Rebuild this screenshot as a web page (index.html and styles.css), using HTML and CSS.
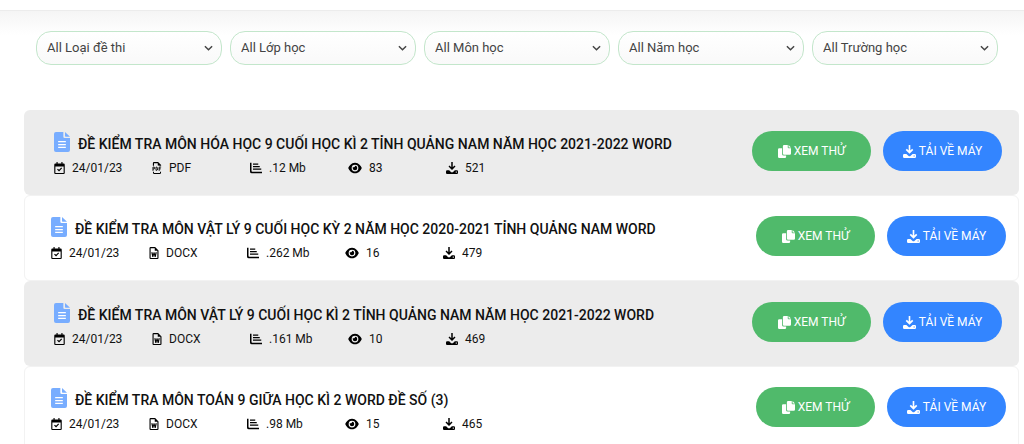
FILE: index.html
```
<!DOCTYPE html>
<html lang="vi">
<head>
<meta charset="utf-8">
<title>Đề thi</title>
<link rel="stylesheet" href="styles.css">
</head>
<body>
<svg class="sprite" aria-hidden="true">
  <symbol id="doc" viewBox="0 0 384 480"><path d="M48 0H224V112q0 32 32 32H384V432q0 48-48 48H48Q0 480 0 432V48Q0 0 48 0z"/><path d="M264 0L384 112H280q-16 0-16-16z"/><path class="doc-lines" d="M100 232H284M100 300H284M100 368H284"/></symbol>
  <symbol id="calendar" viewBox="0 0 448 512"><path fill-rule="evenodd" d="M96 0h48v64h160V0h48v64h48q48 0 48 48v352q0 48-48 48H48Q0 512 0 464V112Q0 64 48 64h48zM48 192v272h352V192zM334 270L204 400 120 318l34-34 50 48 96-96z"/></symbol>
  <symbol id="word" viewBox="0 0 384 512"><path fill-rule="evenodd" d="M48 0h192l144 144v320q0 48-48 48H48Q0 512 0 464V48Q0 0 48 0zM48 48v416h288V160H224V48z"/><path d="M76 224h54l20 100 24-100h40l24 100 20-100h54l-48 200h-44l-28-100-28 100h-44z"/></symbol>
  <symbol id="pdf" viewBox="0 0 416 512"><path d="M32 160V48Q32 0 80 0h176l128 128v32h-48l-96-16V48H80v112zM32 416h48v48h256v-48h48q0 96-48 96H80q-48 0-48-96z"/><path class="pdf-mark" d="M36 376V216h36q40 0 40 40t-40 40H36M166 218V358h16q52 0 52-70t-52-70zM300 376V216h84M300 292h68"/></symbol>
  <symbol id="chart" viewBox="0 0 512 512"><path d="M0 32h64v350q0 34 34 34h414v64H80Q0 480 0 400zM128 60h224v60H128zM128 166h288v60H128zM128 272h352v60H128z"/></symbol>
  <symbol id="eye" viewBox="0 0 576 512"><path fill-rule="evenodd" d="M288 32c-81 0-145 37-192 80C49 156 18 208 3 244q-5 12 0 24c15 36 46 88 93 132 47 43 111 80 192 80s145-37 192-80c47-44 78-96 93-132q5-12 0-24c-15-36-46-88-93-132-47-43-111-80-192-80zM144 256a144 144 0 1 1 288 0 144 144 0 1 1-288 0z"/><path d="M288 160q0 74-64 64-14 0-31-5-2 18-1 37a96 96 0 1 0 96-96z"/></symbol>
  <symbol id="download" viewBox="0 0 512 512"><path fill-rule="evenodd" d="M224 0h64v220l72-70 46 46-150 148-150-148 46-46 72 70zM0 400q0-48 48-48h86l76 74q46 40 92 0l76-74h86q48 0 48 48v64q0 48-48 48H48Q0 512 0 464zM416 410v44h44v-44z"/></symbol>
  <symbol id="copy" viewBox="0 0 512 512"><path d="M240 0h144v96q0 32 32 32h96v208q0 48-48 48H240q-48 0-48-48V48q0-48 48-48zM416 0l96 96h-96zM48 128h112v224q0 64 64 64h96v48q0 48-48 48H48Q0 512 0 464V176q0-48 48-48z"/></symbol>
  <symbol id="chevron" viewBox="0 0 10 6"><path class="chevron-line" d="M1 1l4 4 4-4"/></symbol>
</svg>

<header class="topbar"></header>
<main class="page">
  <form class="filters">
    <div class="filter"><select class="filter-select" aria-label="Loại đề thi"><option>All Loại đề thi</option></select><svg class="chevron"><use href="#chevron"/></svg></div>
    <div class="filter"><select class="filter-select" aria-label="Lớp học"><option>All Lớp học</option></select><svg class="chevron"><use href="#chevron"/></svg></div>
    <div class="filter"><select class="filter-select" aria-label="Môn học"><option>All Môn học</option></select><svg class="chevron"><use href="#chevron"/></svg></div>
    <div class="filter"><select class="filter-select" aria-label="Năm học"><option>All Năm học</option></select><svg class="chevron"><use href="#chevron"/></svg></div>
    <div class="filter"><select class="filter-select" aria-label="Trường học"><option>All Trường học</option></select><svg class="chevron"><use href="#chevron"/></svg></div>
  </form>

  <section class="list">
    <article class="item">
      <div class="info">
        <h2 class="title"><svg class="doc"><use href="#doc"/></svg><a class="title-link" href="#">ĐỀ KIỂM TRA MÔN HÓA HỌC 9 CUỐI HỌC KÌ 2 TỈNH QUẢNG NAM NĂM HỌC 2021-2022 WORD</a></h2>
        <ul class="meta">
          <li class="fact"><svg class="icon"><use href="#calendar"/></svg>24/01/23</li>
          <li class="fact"><svg class="icon file"><use href="#pdf"/></svg>PDF</li>
          <li class="fact"><svg class="icon wide"><use href="#chart"/></svg>.12 Mb</li>
          <li class="fact"><svg class="icon eye"><use href="#eye"/></svg>83</li>
          <li class="fact"><svg class="icon wide"><use href="#download"/></svg>521</li>
        </ul>
      </div>
      <div class="actions">
        <button class="btn preview" type="button"><svg class="btn-icon"><use href="#copy"/></svg>XEM THỬ</button>
        <button class="btn get" type="button"><svg class="btn-icon"><use href="#download"/></svg>TẢI VỀ MÁY</button>
      </div>
    </article>
    <article class="item">
      <div class="info">
        <h2 class="title"><svg class="doc"><use href="#doc"/></svg><a class="title-link" href="#">ĐỀ KIỂM TRA MÔN VẬT LÝ 9 CUỐI HỌC KỲ 2 NĂM HỌC 2020-2021 TỈNH QUẢNG NAM WORD</a></h2>
        <ul class="meta">
          <li class="fact"><svg class="icon"><use href="#calendar"/></svg>24/01/23</li>
          <li class="fact"><svg class="icon file"><use href="#word"/></svg>DOCX</li>
          <li class="fact"><svg class="icon wide"><use href="#chart"/></svg>.262 Mb</li>
          <li class="fact"><svg class="icon eye"><use href="#eye"/></svg>16</li>
          <li class="fact"><svg class="icon wide"><use href="#download"/></svg>479</li>
        </ul>
      </div>
      <div class="actions">
        <button class="btn preview" type="button"><svg class="btn-icon"><use href="#copy"/></svg>XEM THỬ</button>
        <button class="btn get" type="button"><svg class="btn-icon"><use href="#download"/></svg>TẢI VỀ MÁY</button>
      </div>
    </article>
    <article class="item">
      <div class="info">
        <h2 class="title"><svg class="doc"><use href="#doc"/></svg><a class="title-link" href="#">ĐỀ KIỂM TRA MÔN VẬT LÝ 9 CUỐI HỌC KÌ 2 TỈNH QUẢNG NAM NĂM HỌC 2021-2022 WORD</a></h2>
        <ul class="meta">
          <li class="fact"><svg class="icon"><use href="#calendar"/></svg>24/01/23</li>
          <li class="fact"><svg class="icon file"><use href="#word"/></svg>DOCX</li>
          <li class="fact"><svg class="icon wide"><use href="#chart"/></svg>.161 Mb</li>
          <li class="fact"><svg class="icon eye"><use href="#eye"/></svg>10</li>
          <li class="fact"><svg class="icon wide"><use href="#download"/></svg>469</li>
        </ul>
      </div>
      <div class="actions">
        <button class="btn preview" type="button"><svg class="btn-icon"><use href="#copy"/></svg>XEM THỬ</button>
        <button class="btn get" type="button"><svg class="btn-icon"><use href="#download"/></svg>TẢI VỀ MÁY</button>
      </div>
    </article>
    <article class="item">
      <div class="info">
        <h2 class="title"><svg class="doc"><use href="#doc"/></svg><a class="title-link" href="#">ĐỀ KIỂM TRA MÔN TOÁN 9 GIỮA HỌC KÌ 2 WORD ĐỀ SỐ (3)</a></h2>
        <ul class="meta">
          <li class="fact"><svg class="icon"><use href="#calendar"/></svg>24/01/23</li>
          <li class="fact"><svg class="icon file"><use href="#word"/></svg>DOCX</li>
          <li class="fact"><svg class="icon wide"><use href="#chart"/></svg>.98 Mb</li>
          <li class="fact"><svg class="icon eye"><use href="#eye"/></svg>15</li>
          <li class="fact"><svg class="icon wide"><use href="#download"/></svg>465</li>
        </ul>
      </div>
      <div class="actions">
        <button class="btn preview" type="button"><svg class="btn-icon"><use href="#copy"/></svg>XEM THỬ</button>
        <button class="btn get" type="button"><svg class="btn-icon"><use href="#download"/></svg>TẢI VỀ MÁY</button>
      </div>
    </article>
  </section>
</main>
</body>
</html>
```
FILE: styles.css
```
* { box-sizing: border-box; }
html { overflow-y: scroll; scrollbar-width: none; }
body {
  margin: 0;
  background: #fff;
  color: #111;
  font-family: Roboto, "Liberation Sans", sans-serif;
}
.sprite { display: none; }
.topbar { height: 10px; background: #fff; }
.page {
  border-top: 1px solid #ececec;
  padding: 20px 5px 0 24px;
  background: linear-gradient(#f5f5f5, #fff 24px);
}
.filters {
  display: grid;
  grid-template-columns: repeat(5, 1fr);
  gap: 8px;
  padding: 0 21px 0 12px;
}
.filter { display: grid; align-items: center; }
.filter-select {
  grid-area: 1 / 1;
  width: 100%;
  height: 34px;
  padding: 0 28px 0 10px;
  appearance: none;
  border: 1px solid #c3e6cb;
  border-radius: 15px;
  background: linear-gradient(#fff, #f9f9f9);
  color: #444;
  font: 400 13px/20px Roboto, "Liberation Sans", sans-serif;
}
.chevron {
  grid-area: 1 / 1;
  justify-self: end;
  width: 9px;
  height: 6px;
  margin-right: 9px;
  pointer-events: none;
}
.chevron-line { fill: none; stroke: #444; stroke-width: 1.6; }
.list { margin-top: 45px; }
.item {
  display: flex;
  justify-content: space-between;
  align-items: flex-start;
  min-height: 85px;
  padding: 20px 17px 18px 30px;
  border-radius: 6px;
  background: #ececec;
}
.item:nth-child(even) {
  min-height: 86px;
  padding: 19px 12px 18px 26px;
  border: 1px solid #f2f2f2;
  background: #fff;
}
.title {
  display: flex;
  align-items: center;
  gap: 8px;
  margin: 0;
  font-size: 14px;
  line-height: 20px;
  font-weight: 500;
}
.title-link { padding-top: 4px; color: #111; text-decoration: none; }
.doc { flex: none; width: 16px; height: 20px; fill: #78adff; }
.doc-lines { stroke: #fff; stroke-width: 30; }
.meta {
  display: grid;
  grid-template-columns: repeat(5, 98px);
  margin: 5px 0 0;
  padding: 0;
  list-style: none;
}
.fact {
  display: flex;
  align-items: center;
  gap: 7px;
  font-size: 12px;
  line-height: 18px;
}
.icon { width: 11px; height: 12px; fill: #000; }
.icon.file { width: 10px; }
.icon.wide { width: 12px; }
.icon.eye { width: 14px; }
.pdf-mark { fill: none; stroke: #000; stroke-width: 40; }
.actions { display: flex; gap: 12px; padding-top: 1px; }
.btn {
  display: flex;
  align-items: center;
  justify-content: center;
  gap: 3px;
  width: 119px;
  height: 40px;
  padding: 0;
  border: 0;
  border-radius: 20px;
  color: #fff;
  font: 400 12px/20px Roboto, "Liberation Sans", sans-serif;
  white-space: nowrap;
}
.preview { background: #50ba6b; }
.get { background: #3385ff; }
.btn-icon { width: 13px; height: 13px; fill: #fff; }
```
